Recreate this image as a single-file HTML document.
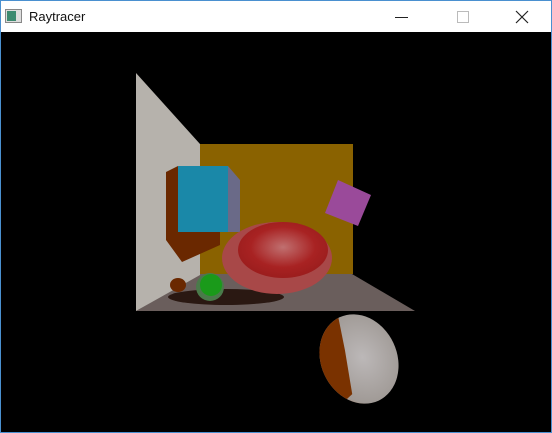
<!DOCTYPE html>
<html><head><style>
body{margin:0;width:552px;height:433px;overflow:hidden;background:#000;font-family:"Liberation Sans",sans-serif}
.win{position:absolute;left:0;top:0;width:550px;height:431px;border:1px solid #4a90d0;background:#000}
.tb{position:absolute;left:0;top:0;width:550px;height:31px;background:#fff}
.t{position:absolute;left:28px;top:8px;font-size:13px;color:#111}
</style></head><body>
<div class="win">
<div class="tb">
<svg width="550" height="31" style="position:absolute;left:0;top:0">
<rect x="4.5" y="8.5" width="16" height="13" fill="#ddd" stroke="#888"/>
<rect x="6" y="10" width="9" height="10" fill="#3c8a70"/>
<line x1="394" y1="16.5" x2="407" y2="16.5" stroke="#222"/>
<rect x="456.5" y="10.5" width="11" height="11" fill="none" stroke="#bbb"/>
<path d="M515 10 L527 22 M527 10 L515 22" stroke="#222" stroke-width="1.2"/>
</svg>
<div class="t">Raytracer</div>
</div>
</div>
<svg width="552" height="433" style="position:absolute;left:0;top:0">
<defs>
<radialGradient id="rg" cx="0.5" cy="0.45" r="0.6"><stop offset="0" stop-color="#c07070"/><stop offset="0.6" stop-color="#a82222"/><stop offset="1" stop-color="#981c1c"/></radialGradient>
<radialGradient id="eg" cx="0.55" cy="0.5" r="0.6"><stop offset="0" stop-color="#bcb8b8"/><stop offset="0.85" stop-color="#a09a96"/><stop offset="1" stop-color="#b08060"/></radialGradient>
<clipPath id="cl"><polygon points="300,300 358,312 350,345 338,388 300,400"/></clipPath>
</defs>
<polygon points="136,311 200,274 352,274 415,311" fill="#6a5e5c"/>
<rect x="200" y="144" width="153" height="130" fill="#8a6200"/>
<polygon points="136,73 200,144 200,275 136,311" fill="#b6b2ac"/>
<polygon points="166,172 178,166 178,232 220,232 220,245 182,262 166,240" fill="#6a2800"/>
<polygon points="228,166 240,180 240,232 228,232" fill="#6a6a88"/>
<rect x="178" y="166" width="50" height="66" fill="#1a88a8"/>
<polygon points="338,180 371,195 358,226 325,213" fill="#9a4a9a"/>
<ellipse cx="226" cy="297" rx="58" ry="8" fill="#2a1812"/>
<ellipse cx="178" cy="285" rx="8" ry="7" fill="#6a2800"/>
<ellipse cx="277" cy="258" rx="55" ry="36" fill="#a84848"/>
<ellipse cx="283" cy="250" rx="45" ry="28" fill="url(#rg)"/>
<circle cx="210" cy="287" r="14" fill="#4a7a4a"/>
<circle cx="211" cy="285" r="11" fill="#1a9a1a"/>
<ellipse cx="359" cy="359" rx="38" ry="46" transform="rotate(-25 359 359)" fill="url(#eg)"/>
<ellipse cx="359" cy="359" rx="38" ry="46" transform="rotate(-25 359 359)" fill="#7a3200" clip-path="url(#cl)"/>
</svg>
</body></html>
